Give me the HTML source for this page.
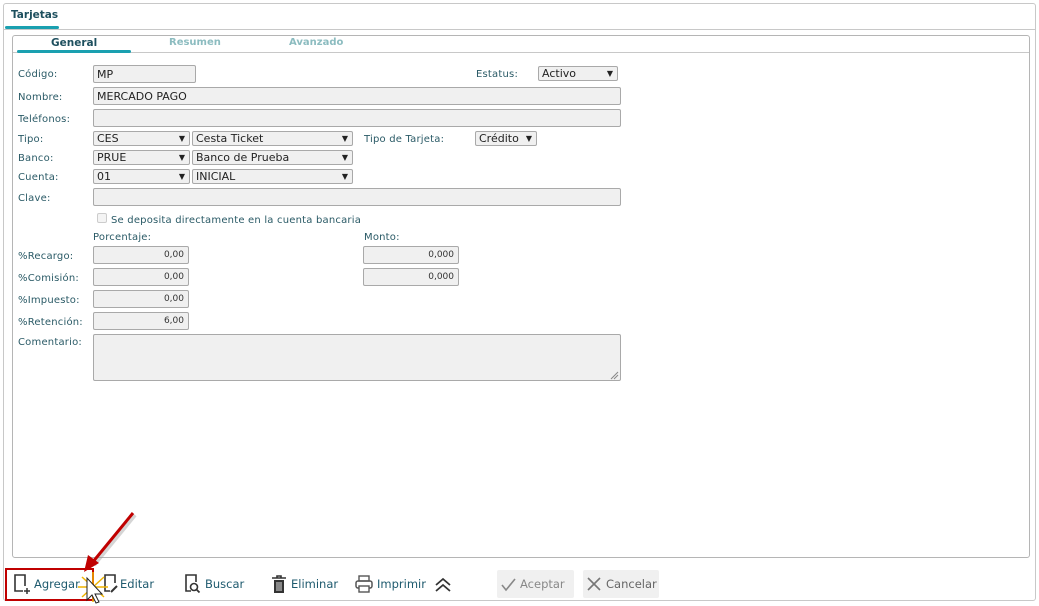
<!DOCTYPE html>
<html><head><meta charset="utf-8"><style>
*{box-sizing:border-box;margin:0;padding:0}
body{width:1039px;height:606px;background:#fff;position:relative;overflow:hidden;font-family:"DejaVu Sans","Liberation Sans",sans-serif;font-size:10px;color:#2a5a66}
.a{position:absolute}
.lbl{position:absolute;font-size:10px;color:#2a5a66;letter-spacing:.2px;margin-top:1px}
.in{position:absolute;background:#f0f0f0;border:1px solid #a9a9a9;border-radius:2px;font-size:11px;color:#222;padding:2px 0 0 3px;height:18px}
.num{text-align:right;padding:3px 4px 0 0;font-size:9px;color:#333}
.sel{position:absolute;background:#f0f0f0;border:1px solid #a9a9a9;border-radius:2px;font-size:11px;color:#222;padding:0 0 0 3px;height:15px;line-height:14px}
.sel:after{content:"▼";position:absolute;right:4px;top:0;font-size:8px;color:#222}
.tb{position:absolute;top:577px;font-size:11.5px;color:#1e5a6e}
</style></head><body>
<div class="a" style="left:3px;top:3px;width:1033px;height:598px;border:1px solid #c8c8c8;border-radius:3px"></div>
<div class="a" style="left:4px;top:29px;width:1031px;border-top:1px solid #c8c8c8"></div>
<div class="a" style="left:11px;top:9px;font-weight:bold;font-size:10.5px;color:#1d4f5e">Tarjetas</div>
<div class="a" style="left:5px;top:26px;width:54px;height:3px;background:#1aa0b0;border-radius:2px"></div>
<div class="a" style="left:12px;top:35px;width:1018px;height:523px;border:1px solid #b5b5b5;border-radius:3px"></div>
<div class="a" style="left:13px;top:52px;width:1016px;border-top:1px solid #c8c8c8"></div>
<div class="a" style="left:51px;top:37px;font-weight:bold;font-size:10.5px;color:#1d4f5e">General</div>
<div class="a" style="left:169px;top:37px;font-weight:bold;font-size:10px;color:#8cbcc0">Resumen</div>
<div class="a" style="left:289px;top:37px;font-weight:bold;font-size:10px;color:#8cbcc0">Avanzado</div>
<div class="a" style="left:17px;top:50px;width:114px;height:3px;background:#1aa0b0;border-radius:2px"></div>

<div class="lbl" style="left:18px;top:68px">Código:</div>
<div class="in" style="left:93px;top:65px;width:103px">MP</div>
<div class="lbl" style="left:476px;top:68px">Estatus:</div>
<div class="sel" style="left:538px;top:66px;width:80px">Activo</div>
<div class="lbl" style="left:18px;top:91px">Nombre:</div>
<div class="in" style="left:93px;top:87px;width:528px">MERCADO PAGO</div>
<div class="lbl" style="left:18px;top:113px">Teléfonos:</div>
<div class="in" style="left:93px;top:109px;width:528px"></div>
<div class="lbl" style="left:18px;top:133px">Tipo:</div>
<div class="sel" style="left:93px;top:131px;width:97px">CES</div>
<div class="sel" style="left:192px;top:131px;width:161px">Cesta Ticket</div>
<div class="lbl" style="left:364px;top:133px">Tipo de Tarjeta:</div>
<div class="sel" style="left:475px;top:131px;width:62px">Crédito</div>
<div class="lbl" style="left:18px;top:152px">Banco:</div>
<div class="sel" style="left:93px;top:150px;width:97px">PRUE</div>
<div class="sel" style="left:192px;top:150px;width:161px">Banco de Prueba</div>
<div class="lbl" style="left:18px;top:171px">Cuenta:</div>
<div class="sel" style="left:93px;top:169px;width:97px">01</div>
<div class="sel" style="left:192px;top:169px;width:161px">INICIAL</div>
<div class="lbl" style="left:18px;top:192px">Clave:</div>
<div class="in" style="left:93px;top:188px;width:528px"></div>

<div class="a" style="left:97px;top:213px;width:10px;height:10px;border:1px solid #ccc;border-radius:2px;background:#f4f4f4"></div>
<div class="lbl" style="left:111px;top:214px">Se deposita directamente en la cuenta bancaria</div>
<div class="lbl" style="left:93px;top:231px">Porcentaje:</div>
<div class="lbl" style="left:364px;top:231px">Monto:</div>
<div class="lbl" style="left:18px;top:250px">%Recargo:</div>
<div class="in num" style="left:93px;top:246px;width:96px">0,00</div>
<div class="in num" style="left:363px;top:246px;width:96px">0,000</div>
<div class="lbl" style="left:18px;top:272px">%Comisión:</div>
<div class="in num" style="left:93px;top:268px;width:96px">0,00</div>
<div class="in num" style="left:363px;top:268px;width:96px">0,000</div>
<div class="lbl" style="left:18px;top:294px">%Impuesto:</div>
<div class="in num" style="left:93px;top:290px;width:96px">0,00</div>
<div class="lbl" style="left:18px;top:316px">%Retención:</div>
<div class="in num" style="left:93px;top:312px;width:96px">6,00</div>
<div class="lbl" style="left:18px;top:336px">Comentario:</div>
<div class="in" style="left:93px;top:334px;width:528px;height:47px"></div>
<svg class="a" style="left:610px;top:371px" width="9" height="9"><path d="M1 8L8 1M4 8L8 4" stroke="#888" stroke-width="1"/></svg>

<svg class="a" style="left:12px;top:573px" width="20" height="22"><path d="M11 18H3V2h10v11" fill="none" stroke="#333" stroke-width="1.6"/><path d="M15 15v6M12 18h6" stroke="#333" stroke-width="1.5"/></svg>
<div class="tb" style="left:34px">Agregar</div>
<svg class="a" style="left:102px;top:573px" width="18" height="22"><path d="M8 18H3V2h10v8" fill="none" stroke="#333" stroke-width="1.6"/><path d="M9 19l6-6" stroke="#333" stroke-width="2"/></svg>
<div class="tb" style="left:120px">Editar</div>
<svg class="a" style="left:183px;top:573px" width="20" height="22"><path d="M8 18H3V2h10v7" fill="none" stroke="#333" stroke-width="1.6"/><circle cx="11" cy="14" r="3.5" fill="none" stroke="#333" stroke-width="1.6"/><path d="M13.5 16.5l3 3" stroke="#333" stroke-width="1.8"/></svg>
<div class="tb" style="left:205px">Buscar</div>
<svg class="a" style="left:270px;top:574px" width="18" height="20"><path d="M2 4h14M7 4V2h4v2" fill="none" stroke="#333" stroke-width="1.6"/><path d="M4 6h10v13H4z" fill="#333"/><path d="M7 8v9M9 8v9M11 8v9" stroke="#ddd" stroke-width="1"/></svg>
<div class="tb" style="left:291px">Eliminar</div>
<svg class="a" style="left:354px;top:574px" width="20" height="20"><rect x="5" y="2" width="10" height="5" fill="none" stroke="#555" stroke-width="1.4"/><rect x="2" y="7" width="16" height="7" rx="2" fill="none" stroke="#555" stroke-width="1.5"/><rect x="5" y="12" width="10" height="6" fill="#fff" stroke="#555" stroke-width="1.4"/></svg>
<div class="tb" style="left:377px">Imprimir</div>
<svg class="a" style="left:433px;top:576px" width="20" height="18"><path d="M3 9l7-6 7 6M3 15l7-6 7 6" fill="none" stroke="#333" stroke-width="1.8"/></svg>
<div class="a" style="left:497px;top:570px;width:77px;height:28px;background:#f0f0f0;border-radius:2px"></div>
<svg class="a" style="left:500px;top:576px" width="18" height="16"><path d="M2 9l4 5 9-11" fill="none" stroke="#888" stroke-width="1.6"/></svg>
<div class="tb" style="left:520px;color:#888">Aceptar</div>
<div class="a" style="left:583px;top:570px;width:76px;height:28px;background:#f0f0f0;border-radius:2px"></div>
<svg class="a" style="left:586px;top:576px" width="16" height="16"><path d="M2 2l12 12M14 2L2 14" stroke="#777" stroke-width="1.6"/></svg>
<div class="tb" style="left:606px;color:#666">Cancelar</div>

<div class="a" style="left:5px;top:568px;width:89px;height:33px;border:2px solid #c00000"></div>
<svg class="a" style="left:70px;top:505px" width="80" height="101">
<path d="M63 8L22 58" stroke="#999" stroke-width="4" opacity=".4" transform="translate(2,2)"/>
<path d="M63 8L22 58" stroke="#c00000" stroke-width="3"/>
<path d="M14 67L18 50 29 58z" fill="#c00000"/>
<g stroke="#f0b400" stroke-width="1.5"><path d="M8 82h30M23 67v30M12 72l22 20M34 72L12 92"/></g>
<path d="M17 73v22l5-5 4 8 3-1-4-8h7z" fill="#fff" stroke="#222" stroke-width="1"/>
</svg>
</body></html>
